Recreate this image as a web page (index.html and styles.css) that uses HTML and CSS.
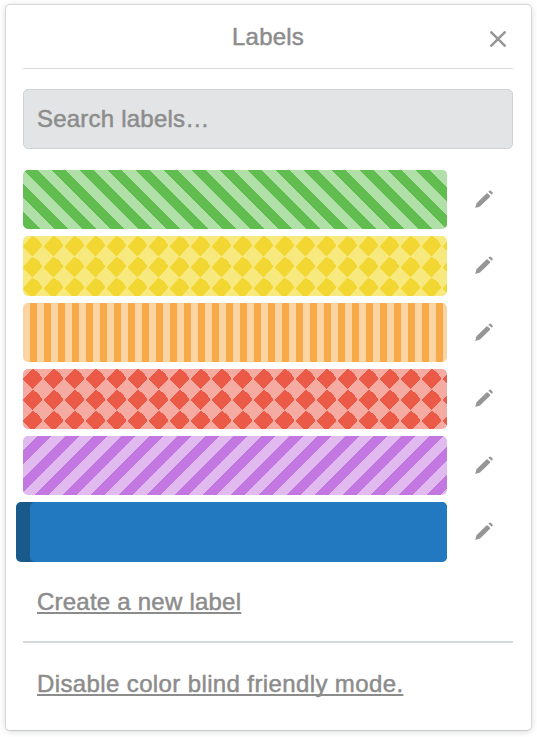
FILE: index.html
```html
<!DOCTYPE html>
<html lang="en">
<head>
<meta charset="utf-8">
<title>Labels</title>
<link rel="stylesheet" href="styles.css">
</head>
<body>
<svg class="defs" aria-hidden="true">
  <defs>
    <pattern id="diamonds" width="21" height="21" patternUnits="userSpaceOnUse">
      <path fill="currentColor" d="M9 0h1l1 1h1v1h2v1h1v1h1v1h1v2h1v1h1v2L10 20H9L0 11v-1z"/>
    </pattern>
    <symbol id="pencil" viewBox="0 0 18 18">
      <path d="M.2 18L1.5 13.2 11.4 3.6Q12.2 3 13 3.7L14.9 5.6Q15.5 6.4 14.8 7.1L5 16.5ZM13.3 1.8 14.2.9Q15 .1 15.8.8L17.5 2.4Q18.2 3.2 17.6 3.8L16.8 4.8Z"/>
    </symbol>
  </defs>
</svg>
<section class="popover">
  <header class="header">
    <h1 class="title">Labels</h1>
    <button class="close" aria-label="Close"><svg viewBox="0 0 16 16"><path d="M1.3 1.3l13.4 13.4M14.7 1.3l-13.4 13.4"/></svg></button>
  </header>
  <input class="search" type="text" placeholder="Search labels…" aria-label="Search">
  <ul class="labels">
    <li class="row"><span class="label green"></span><button class="edit" aria-label="Edit"><svg><use href="#pencil"/></svg></button></li>
    <li class="row"><span class="label yellow"><svg class="fill"><rect width="100%" height="100%" fill="url(#diamonds)"/></svg></span><button class="edit" aria-label="Edit"><svg><use href="#pencil"/></svg></button></li>
    <li class="row"><span class="label orange"></span><button class="edit" aria-label="Edit"><svg><use href="#pencil"/></svg></button></li>
    <li class="row"><span class="label red"><svg class="fill"><defs><pattern id="diamonds-red" width="21" height="21" patternUnits="userSpaceOnUse"><path d="M9 0h1l1 1h1v1h2v1h1v1h1v1h1v2h1v1h1v2L10 20H9L0 11v-1z"/></pattern></defs><rect width="100%" height="100%" fill="url(#diamonds-red)"/></svg></span><button class="edit" aria-label="Edit"><svg><use href="#pencil"/></svg></button></li>
    <li class="row"><span class="label purple"></span><button class="edit" aria-label="Edit"><svg><use href="#pencil"/></svg></button></li>
    <li class="row"><span class="label blue"><span class="face"></span></span><button class="edit" aria-label="Edit"><svg><use href="#pencil"/></svg></button></li>
  </ul>
  <a class="link create" href="#">Create a new label</a>
  <hr class="divider">
  <a class="link mode" href="#">Disable color blind friendly mode.</a>
</section>
</body>
</html>
```
FILE: styles.css
```css
* { box-sizing: border-box; }
body {
  margin: 0;
  padding: 4px 5px 6px;
  background: #fff;
  color: #8c8c8c;
  font: 24px/28px "Liberation Sans", Arial, sans-serif;
  -webkit-text-stroke: 0.5px;
}
.defs { position: absolute; width: 0; height: 0; color: #f2d631; }
.popover {
  display: flex;
  flex-direction: column;
  width: 527px;
  height: 727px;
  padding: 0 18px 0 17px;
  background: #fff;
  border: 1px solid #d3d7da;
  border-bottom-color: #c4c9cc;
  border-radius: 5px;
  box-shadow: 0 1px 6px rgba(0, 0, 0, .14);
}
button { padding: 0; border: 0; background: none; }
.header {
  display: grid;
  grid-template-columns: 32px 1fr 32px;
  align-items: center;
  width: 490px;
  height: 64px;
  border-bottom: 1px solid #d6dadc;
}
.title {
  grid-column: 2;
  margin: 0;
  font-size: 24px;
  font-weight: 400;
  letter-spacing: .2px;
  text-align: center;
}
.close { height: 16px; margin-top: 5px; }
.close svg {
  display: block;
  width: 16px;
  height: 16px;
  margin-left: 9px;
  fill: none;
  stroke: #969696;
  stroke-width: 2.5;
  stroke-linecap: round;
}
.search {
  width: 490px;
  height: 60px;
  margin: 20px 0 21px;
  padding: 0 12px 0 13px;
  background: #e2e4e6;
  border: 1px solid #cdd2d4;
  border-radius: 5px;
  font: inherit;
  letter-spacing: .22px;
  -webkit-text-stroke: 0.5px;
}
.search::placeholder { color: #8c8c8c; opacity: 1; }
.labels {
  display: grid;
  grid-template-rows: 59px 60px 59px 60px 59px 60px;
  gap: 7px;
  margin: 0;
  padding: 0;
  list-style: none;
}
.row { display: flex; align-items: center; }
.label {
  width: 424px;
  height: 100%;
  border-radius: 5px;
  overflow: hidden;
}
.fill { display: block; width: 100%; height: 100%; shape-rendering: crispEdges; }
.green {
  background: linear-gradient(45deg, #61bd4f 25%, #b0dfa7 25% 50%, #61bd4f 50% 75%, #b0dfa7 75%) 1px 0 / 28px 28px;
}
.yellow { background: #f8e97f; }
.orange { background: repeating-linear-gradient(90deg, #fad4a2 0 7px, #f7aa47 7px 14px); }
.red { background: #f5aaa2; fill: #eb5a46; }
.purple {
  background: linear-gradient(135deg, #e1baef 25%, #c377e0 25% 50%, #e1baef 50% 75%, #c377e0 75%) 0 0 / 28px 28px;
}
.blue { width: 431px; margin-left: -7px; padding-left: 14px; background: #195a8b; }
.face { display: block; height: 100%; background: #2279bf; border-radius: 5px; }
.edit { width: 18px; height: 18px; margin: 0 0 2px 28px; fill: #969696; }
.edit svg { display: block; width: 18px; height: 18px; }
.link {
  align-self: flex-start;
  margin-left: 14px;
  color: inherit;
  white-space: nowrap;
  text-decoration: underline 2px;
  text-decoration-skip-ink: none;
  text-underline-offset: 2px;
}
.create { margin-top: 26px; letter-spacing: .23px; }
.mode { letter-spacing: .38px; }
.divider { width: 490px; height: 2px; margin: 25px 0 27px; border: 0; background: #d6dadc; }
```
